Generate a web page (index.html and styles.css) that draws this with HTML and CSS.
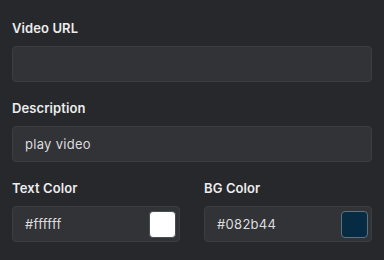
FILE: index.html
```html
<!DOCTYPE html>
<html lang="en">
<head>
    <meta charset="UTF-8">
    <meta name="viewport" content="width=device-width, initial-scale=1.0">
    <title>Video Button Settings</title>
    <link rel="stylesheet" href="styles.css">
</head>
<body>

    <div class="panel">
        <div class="field">
            <label>Video URL</label>
            <div class="input"></div>
        </div>

        <div class="field">
            <label>Description</label>
            <div class="input">play video</div>
        </div>

        <div class="row">
            <div class="field">
                <label>Text Color</label>
                <div class="input color-input">
                    <span>#ffffff</span>
                    <span class="swatch swatch-white"></span>
                </div>
            </div>
            <div class="field">
                <label>BG Color</label>
                <div class="input color-input">
                    <span>#082b44</span>
                    <span class="swatch swatch-navy"></span>
                </div>
            </div>
        </div>
    </div>

</body>
</html>
```

FILE: styles.css
```css
body {
    margin: 0;
    background-color: #27282b;
    font-family: "Inter", "Liberation Sans", sans-serif;
}
.panel {
    width: 360px;
    padding: 18px 12px 0;
}
.field {
    display: flex;
    flex-direction: column;
    gap: 8px;
    margin-bottom: 16px;
}
.row .field {
    margin-bottom: 0;
}
label {
    height: 20px;
    line-height: 20px;
    font-size: 13px;
    font-weight: 600;
    color: #ececee;
    letter-spacing: 0.1px;
}
.input {
    box-sizing: border-box;
    height: 36px;
    padding: 0 12px;
    background-color: #323337;
    border: 1px solid #3d3e43;
    border-radius: 4px;
    color: #dcdcde;
    font-size: 13px;
    line-height: 34px;
    letter-spacing: 0.3px;
}
.row {
    display: grid;
    grid-template-columns: 1fr 1fr;
    gap: 24px;
}
.color-input {
    display: flex;
    justify-content: space-between;
    align-items: center;
    padding-right: 3px;
}
.swatch {
    box-sizing: border-box;
    width: 27px;
    height: 27px;
    border-radius: 4px;
}
.swatch-white { background: #ffffff; border: 1px solid #4a4b50; }
.swatch-navy { background: #082b44; border: 1px solid #5b7283; }
```
